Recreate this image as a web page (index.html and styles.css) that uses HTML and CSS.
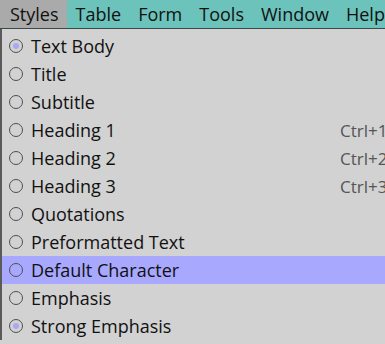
FILE: index.html
```html
<!DOCTYPE html>
<html>
<head>
<meta charset="utf-8">
<link rel="stylesheet" href="styles.css">
</head>
<body>
<div class="menubar">
  <span class="mitem active">Styles</span>
  <span class="mitem">Table</span>
  <span class="mitem">Form</span>
  <span class="mitem">Tools</span>
  <span class="mitem">Window</span>
  <span class="mitem">Help</span>
</div>
<div class="menu">
  <div class="row"><span class="radio on"></span><span class="label">Text Body</span></div>
  <div class="row"><span class="radio"></span><span class="label">Title</span></div>
  <div class="row"><span class="radio"></span><span class="label">Subtitle</span></div>
  <div class="row"><span class="radio"></span><span class="label">Heading 1</span><span class="key">Ctrl+1</span></div>
  <div class="row"><span class="radio"></span><span class="label">Heading 2</span><span class="key">Ctrl+2</span></div>
  <div class="row"><span class="radio"></span><span class="label">Heading 3</span><span class="key">Ctrl+3</span></div>
  <div class="row"><span class="radio"></span><span class="label">Quotations</span></div>
  <div class="row"><span class="radio"></span><span class="label">Preformatted Text</span></div>
  <div class="row hl"><span class="radio"></span><span class="label">Default Character</span></div>
  <div class="row"><span class="radio"></span><span class="label">Emphasis</span></div>
  <div class="row"><span class="radio on"></span><span class="label">Strong Emphasis</span></div>
</div>
</body>
</html>
```
FILE: styles.css
```css
html, body {
  margin: 0;
  padding: 0;
  width: 385px;
  height: 344px;
  overflow: hidden;
  background: #d2d2d2;
  font-family: "Open Sans", "Noto Sans", sans-serif;
  color: #111;
}
.menubar {
  height: 28px;
  background: #6cc3bb;
  border-bottom: 1px solid #3a4a48;
  display: flex;
  white-space: nowrap;
}
.mitem {
  font-size: 18px;
  line-height: 28px;
  padding: 0 8px 0 9px;
}
.mitem.active {
  background: #aaaaaa;
  padding-left: 10px;
  padding-right: 8px;
}
.menu {
  border-left: 2px solid #5a5a5a;
  padding-top: 3px;
  background: #d2d2d2;
}
.row {
  height: 28px;
  display: flex;
  align-items: center;
  white-space: nowrap;
}
.row.hl {
  background: #a8a8ff;
}
.radio {
  box-sizing: border-box;
  width: 14px;
  height: 14px;
  border: 1px solid #505050;
  border-radius: 50%;
  margin-left: 7px;
  margin-right: 8px;
  flex: none;
  position: relative;
}
.radio.on::after {
  content: "";
  position: absolute;
  left: 3px;
  top: 3px;
  width: 6px;
  height: 6px;
  border-radius: 50%;
  background: #a8a8f4;
}
.label {
  font-size: 18px;
  flex: 1;
}
.key {
  font-size: 17px;
  color: #555;
  width: 45px;
  overflow: hidden;
  flex: none;
}
```
